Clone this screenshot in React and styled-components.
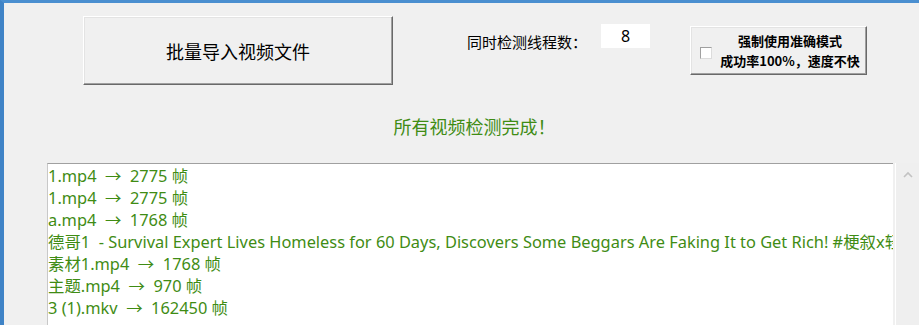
import React from "react"
import styled, { createGlobalStyle } from "styled-components"

const GlobalStyle = createGlobalStyle`
  html, body {
    margin: 0;
    padding: 0;
    background: #f0f0f0;
    overflow: hidden;
  }
  body {
    font-family: "Noto Sans", "Noto Sans CJK SC", sans-serif;
  }
`

const Window = styled.div`
  width: 919px;
  height: 325px;
  box-sizing: border-box;
  border-left: 4px solid #3f83c6;
  border-top: 3px solid #4a8fd0;
  background: #f0f0f0;
  overflow: hidden;
`

const TopRow = styled.div`
  display: flex;
  align-items: flex-start;
  padding: 13px 0 0 79px;
  height: 90px;
  box-sizing: border-box;
`

const ClassicButton = styled.button`
  box-sizing: border-box;
  background: #f0f0f0;
  border: 1px solid;
  border-color: #ffffff #696969 #696969 #ffffff;
  box-shadow: inset -1px -1px 0 #a0a0a0, inset 1px 1px 0 #e3e3e3;
  padding: 0;
  margin: 0;
  color: #000;
  font-family: "Noto Sans CJK SC", sans-serif;
`

const ImportButton = styled(ClassicButton)`
  width: 310px;
  height: 69px;
  font-size: 18px;
`

const ThreadLabel = styled.span`
  margin: 16px 0 0 74px;
  font-size: 15px;
  line-height: 20px;
  color: #000;
  font-family: "Noto Sans CJK SC", sans-serif;
`

const ThreadInput = styled.div`
  margin: 8px 0 0 14px;
  width: 49px;
  height: 24px;
  background: #fff;
  text-align: center;
  font-size: 16px;
  line-height: 24px;
  color: #000;
`

const OptionButton = styled(ClassicButton)`
  margin: 10px 0 0 40px;
  width: 177px;
  height: 49px;
  display: flex;
  align-items: center;
  padding-left: 9px;
`

const CheckBox = styled.span`
  display: block;
  width: 12px;
  height: 12px;
  box-sizing: border-box;
  background: #fff;
  border: 1px solid;
  border-color: #a0a0a0 #dcdcdc #dcdcdc #a0a0a0;
  margin-top: 4px;
`

const OptionText = styled.span`
  flex: 1;
  text-align: center;
  font-size: 13px;
  font-weight: bold;
  line-height: 20px;
  padding-left: 2px;
`

const Status = styled.div`
  text-align: center;
  padding-left: 26px;
  color: #3f8c14;
  font-size: 18px;
  line-height: 24px;
  font-family: "Noto Sans CJK SC", sans-serif;
  margin-top: 21px;
`

const ListBox = styled.div`
  display: flex;
  margin: 25px 0 0 43px;
  height: 170px;
`

const ListArea = styled.div`
  width: 851px;
  box-sizing: border-box;
  background: #fff;
  border-top: 1px solid #a0a0a0;
  border-left: 1px solid #c8c8c8;
  padding: 1px 0 0 0;
  overflow: hidden;
`

const Line = styled.div`
  color: #3f8c14;
  font-size: 16.4px;
  line-height: 22px;
  white-space: pre;
  font-family: "Noto Sans", "Noto Sans CJK SC", sans-serif;
`

const ScrollBar = styled.div`
  width: 24px;
  margin-left: 2px;
  border-left: 1px solid #ffffff;
  background: #efefef;
  display: flex;
  justify-content: center;
  padding-top: 8px;
  box-sizing: border-box;
`

const lines = [
  "1.mp4  →  2775 帧",
  "1.mp4  →  2775 帧",
  "a.mp4  →  1768 帧",
  "德哥1  - Survival Expert Lives Homeless for 60 Days, Discovers Some Beggars Are Faking It to Get Rich! #梗叙x轻松",
  "素材1.mp4  →  1768 帧",
  "主题.mp4  →  970 帧",
  "3 (1).mkv  →  162450 帧",
]

export default function App() {
  return (
    <Window>
      <GlobalStyle />
      <TopRow>
        <ImportButton>批量导入视频文件</ImportButton>
        <ThreadLabel>同时检测线程数：</ThreadLabel>
        <ThreadInput>8</ThreadInput>
        <OptionButton>
          <CheckBox />
          <OptionText>
            强制使用准确模式
            <br />
            成功率100%，速度不快
          </OptionText>
        </OptionButton>
      </TopRow>
      <Status>所有视频检测完成！</Status>
      <ListBox>
        <ListArea>
          {lines.map((text, i) => (
            <Line key={i}>{text}</Line>
          ))}
        </ListArea>
        <ScrollBar>
          <svg width="10" height="7" viewBox="0 0 10 7">
            <path d="M1 6 L5 2 L9 6" fill="none" stroke="#c2c2c2" strokeWidth="1.6" />
          </svg>
        </ScrollBar>
      </ListBox>
    </Window>
  )
}
